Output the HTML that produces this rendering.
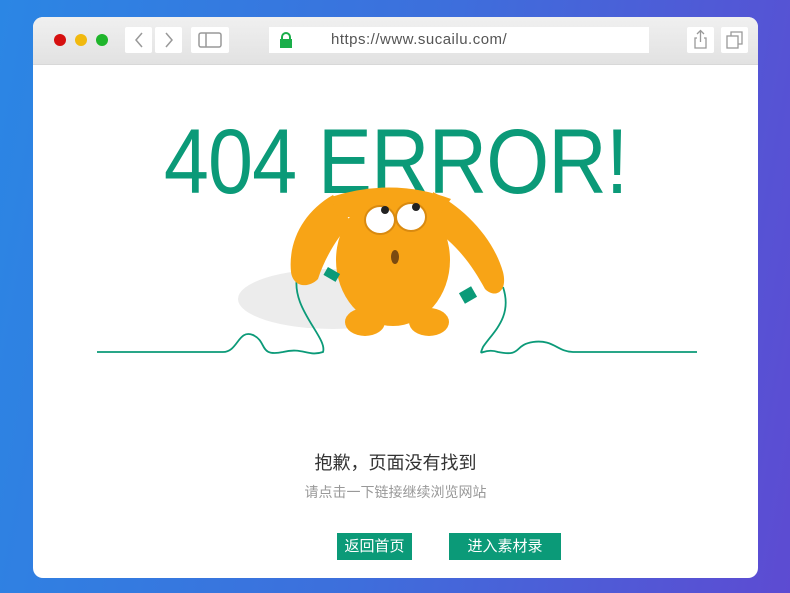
<html><head><style>
body{margin:0;width:790px;height:593px;overflow:hidden;background:linear-gradient(100deg,#2b86e4 0%,#3d6fdc 50%,#5d4bd2 100%);font-family:"Liberation Sans","Noto Sans CJK SC",sans-serif;position:relative}
.win{position:absolute;left:33px;top:17px;width:725px;height:561px;background:#fff;border-radius:10px;overflow:hidden}
.bar{height:47px;background:linear-gradient(#f0f0f0,#e2e2e2);border-bottom:1px solid #d8d8d8;position:relative}
.dot{position:absolute;top:17px;width:12px;height:12px;border-radius:50%}
.btn{position:absolute;top:10px;height:26px;background:#fff;border-radius:2px}
.url{position:absolute;left:236px;top:10px;width:380px;height:26px;background:#fff;font-size:15px;color:#555;letter-spacing:.5px}
h1{position:absolute;left:0;width:725px;top:100px;margin:0;text-align:center;font-weight:normal;color:#0b9a78;font-size:92px;letter-spacing:-1px;line-height:90px;transform:scaleX(0.88);transform-origin:364px 0}
.t1{position:absolute;top:432px;width:725px;text-align:center;font-size:18px;color:#333}
.t2{position:absolute;top:465px;width:725px;text-align:center;font-size:14px;color:#999}
.b{position:absolute;top:516px;height:27px;background:#0b9a78;color:#fff;font-size:15px;line-height:27px;text-align:center}
</style></head><body>
<div class="win">
<div class="bar">
<div class="dot" style="left:21px;background:#d61010"></div>
<div class="dot" style="left:42px;background:#f1b90e"></div>
<div class="dot" style="left:63px;background:#1fb52b"></div>
<div class="btn" style="left:92px;width:27px"><svg width="27" height="26"><path d="M17 6 L11 13 L17 20" stroke="#999" fill="none" stroke-width="1.5"/></svg></div>
<div class="btn" style="left:122px;width:27px"><svg width="27" height="26"><path d="M11 6 L17 13 L11 20" stroke="#999" fill="none" stroke-width="1.5"/></svg></div>
<div class="btn" style="left:158px;width:38px"><svg width="38" height="26"><rect x="8" y="6" width="22" height="14" rx="2" stroke="#999" fill="none" stroke-width="1.5"/><line x1="15" y1="6" x2="15" y2="20" stroke="#999" stroke-width="1.5"/></svg></div>
<div class="url"><svg style="position:absolute;left:10px;top:5px" width="14" height="16"><path d="M3 7V5a4 4 0 0 1 8 0v2" stroke="#1aae4a" stroke-width="2" fill="none"/><rect x="1" y="7" width="12" height="9" fill="#1aae4a"/></svg><span style="position:absolute;left:62px;top:4px">https://www.sucailu.com/</span></div>
<div class="btn" style="left:654px;width:27px"><svg width="27" height="26"><path d="M10 11H8v10h11V11h-2M13.5 15V4M10 7l3.5-3.5L17 7" stroke="#999" fill="none" stroke-width="1.3"/></svg></div>
<div class="btn" style="left:688px;width:27px"><svg width="27" height="26"><rect x="6" y="9" width="11" height="12" stroke="#999" fill="none" stroke-width="1.3"/><path d="M10 9V5h11v12h-4" stroke="#999" fill="none" stroke-width="1.3"/></svg></div>
</div>
<h1>404 ERROR!</h1>
<svg style="position:absolute;left:0;top:0" width="725" height="400">
<ellipse cx="300" cy="282" rx="95" ry="30" fill="#ececec"/>
<path d="M64 335 H190 C205 335 205 312 220 318 C235 325 225 340 250 335 C270 330 275 340 290 335 C295 320 255 290 265 255" stroke="#0b9a78" fill="none" stroke-width="1.8"/>
<path d="M664 335 H540 C525 335 520 322 500 325 C480 328 490 340 465 335 C450 330 445 342 450 330 C460 315 480 300 470 270" stroke="#0b9a78" fill="none" stroke-width="1.8"/>
<g fill="#f8a416">
<path d="M300 178 C270 195 255 225 258 255 C260 270 275 272 285 262 C292 240 305 220 318 205 Z"/>
<path d="M400 175 C430 190 460 220 470 255 C475 275 462 282 452 272 C440 250 425 228 398 210 Z"/>
<ellipse cx="360" cy="243" rx="57" ry="66"/>
<ellipse cx="332" cy="305" rx="20" ry="14"/>
<ellipse cx="396" cy="305" rx="20" ry="14"/>
<path d="M298 180 Q360 160 418 182 L405 200 L305 200Z"/>
</g>
<g fill="#0b9a78"><rect x="292" y="253" width="14" height="9" transform="rotate(30 299 257)"/><rect x="428" y="272" width="14" height="12" transform="rotate(-30 435 278)"/></g>
<ellipse cx="347" cy="203" rx="15" ry="14" fill="#fff" stroke="#d98a10" stroke-width="2"/>
<ellipse cx="378" cy="200" rx="15" ry="14" fill="#fff" stroke="#d98a10" stroke-width="2"/>
<circle cx="352" cy="193" r="4" fill="#222"/><circle cx="383" cy="190" r="4" fill="#222"/>
<ellipse cx="362" cy="240" rx="4" ry="7" fill="#7a4a10"/>
</svg>
<div class="t1">抱歉，页面没有找到</div>
<div class="t2">请点击一下链接继续浏览网站</div>
<div class="b" style="left:304px;width:75px">返回首页</div>
<div class="b" style="left:416px;width:112px">进入素材录</div>
</div>
</body></html>
